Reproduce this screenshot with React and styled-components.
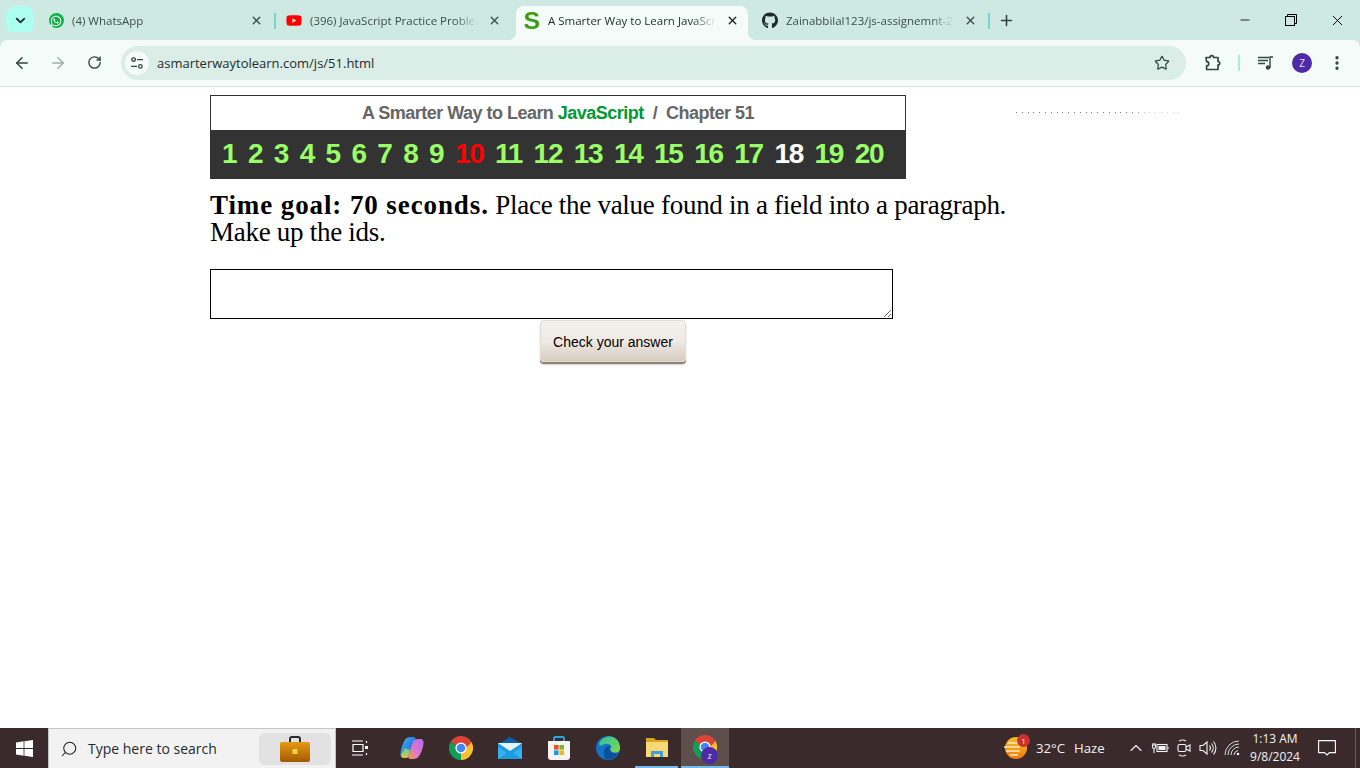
import React from "react";
import styled, { createGlobalStyle } from "styled-components";
import { ArrowLeft, ArrowRight, RotateCw, Star, X, Plus, ChevronDown, EllipsisVertical, Minus, Search, ChevronUp } from "lucide-react";
import { FaGithub, FaYoutube, FaWhatsapp } from "react-icons/fa";

const Global = createGlobalStyle`
  html, body { margin: 0; padding: 0; height: 100%; background: #fff; overflow: hidden; }
  #root { height: 100%; }
  * { box-sizing: border-box; }
`;

const Shell = styled.div`
  display: flex;
  flex-direction: column;
  width: 1360px;
  height: 768px;
  overflow: hidden;
  font-family: "Open Sans", "Noto Sans", sans-serif;
`;

const TabStrip = styled.div`
  display: flex;
  align-items: flex-start;
  height: 40px;
  padding: 6px 0 0 6px;
  background: #cee8e2;
  flex: none;
`;

const TabMenu = styled.div`
  width: 28px;
  height: 28px;
  margin-right: 6px;
  border-radius: 9px;
  background: #adfff0;
  color: #1c2b28;
  display: flex;
  align-items: center;
  justify-content: center;
`;

const Tab = styled.div`
  position: relative;
  width: 232px;
  height: 34px;
  padding: 0 8px 5px;
  display: flex;
  align-items: center;
  gap: 8px;
  border-radius: 8px 8px 0 0;
  background: ${(p) => (p.$active ? "#f4fbf8" : "transparent")};
  color: ${(p) => (p.$active ? "#1d2b28" : "#3d4f4b")};
  ${(p) =>
    p.$active &&
    `
    &::before, &::after {
      content: "";
      position: absolute;
      bottom: 0;
      width: 8px;
      height: 8px;
    }
    &::before { left: -8px; background: radial-gradient(circle at 0 0, #cee8e2 8px, #f4fbf8 8.5px); }
    &::after { right: -8px; background: radial-gradient(circle at 100% 0, #cee8e2 8px, #f4fbf8 8.5px); }
  `}
`;

const FavSlot = styled.span`
  width: 16px;
  height: 16px;
  flex: none;
  display: flex;
  align-items: center;
  justify-content: center;
`;

const WhatsBadge = styled.span`
  width: 15px;
  height: 15px;
  border-radius: 50%;
  background: #12b04a;
  color: #fff;
  display: flex;
  align-items: center;
  justify-content: center;
`;

const SFav = styled.span`
  font: 700 23px/16px "Liberation Sans", Arial, sans-serif;
  color: #3a9e0f;
  transform: scaleX(1.08);
`;

const TabTitle = styled.span`
  width: 168px;
  flex: none;
  overflow: hidden;
  white-space: nowrap;
  font-size: 11.5px;
  line-height: 16px;
  -webkit-mask-image: linear-gradient(90deg, #000 86%, transparent 100%);
  mask-image: linear-gradient(90deg, #000 86%, transparent 100%);
`;

const TabClose = styled.span`
  width: 16px;
  height: 16px;
  flex: none;
  display: flex;
  align-items: center;
  justify-content: center;
  color: ${(p) => (p.$active ? "#1d2b28" : "#3d4f4b")};
`;

const TabGap = styled.span`
  width: 6px;
  height: 34px;
  flex: none;
  padding-bottom: 5px;
  display: flex;
  align-items: center;
  justify-content: center;
  &::after {
    content: "";
    display: ${(p) => (p.$line ? "block" : "none")};
    width: 2px;
    height: 16px;
    background: #7dd6cb;
  }
`;

const NewTab = styled.span`
  width: 28px;
  height: 29px;
  display: flex;
  align-items: center;
  justify-content: center;
  color: #33463f;
`;

const WindowControls = styled.div`
  margin-left: auto;
  margin-top: -6px;
  display: flex;
`;

const WinBtn = styled.span`
  width: 46px;
  height: 40px;
  display: flex;
  align-items: center;
  justify-content: center;
  color: #000;
`;

const Toolbar = styled.div`
  height: 47px;
  flex: none;
  display: flex;
  align-items: center;
  padding: 0 0 1px 4px;
  background: #f4fbf8;
  border-bottom: 1px solid #d8e6e2;
  border-radius: 8px 8px 0 0;
  box-shadow: 0 -8px 0 0 #cee8e2;
`;

const NavBtn = styled.span`
  width: 36px;
  height: 36px;
  flex: none;
  display: flex;
  align-items: center;
  justify-content: center;
  color: ${(p) => (p.$off ? "#9fb0ac" : "#33463f")};
`;

const Omnibox = styled.div`
  width: 1065px;
  height: 34px;
  margin-left: 9px;
  flex: none;
  display: flex;
  align-items: center;
  padding: 0 16px 0 4px;
  background: #daede7;
  border-radius: 17px;
`;

const SiteChip = styled.span`
  width: 24px;
  height: 24px;
  flex: none;
  border-radius: 50%;
  background: #f4fbf8;
  color: #33463f;
  display: flex;
  align-items: center;
  justify-content: center;
  margin-right: 8px;
`;

const Url = styled.span`
  flex: 1;
  font-size: 13px;
  color: #1f2e2b;
`;

const ToolIcon = styled.span`
  width: ${(p) => p.$w || 36}px;
  flex: none;
  display: flex;
  align-items: center;
  justify-content: center;
  color: #33463f;
`;

const ToolSep = styled.span`
  width: 2px;
  height: 16px;
  flex: none;
  background: #9ff0e4;
  margin: 0 0 0 -1px;
`;

const Avatar = styled.span`
  width: 20px;
  height: 20px;
  border-radius: 50%;
  background: #4f2aa6;
  color: #e8defc;
  font-size: 10px;
  display: flex;
  align-items: center;
  justify-content: center;
`;

const Page = styled.main`
  flex: 1;
  min-height: 0;
  padding: 8px 0 0 210px;
  background: #fff;
`;

const TopRow = styled.div`
  display: flex;
  align-items: flex-start;
`;

const HeaderBox = styled.header`
  width: 696px;
  height: 84px;
  flex: none;
  border: 1px solid #333;
  border-bottom: 0;
  background: #fff;
`;

const Dots = styled.div`
  width: 166px;
  height: 1px;
  margin: 17px 0 0 110px;
  background: repeating-linear-gradient(90deg, #777 0 1px, transparent 1px 5.8px);
  -webkit-mask-image: linear-gradient(90deg, #000 70%, #0005 80%);
  mask-image: linear-gradient(90deg, #000 70%, #0005 80%);
`;

const Title = styled.h1`
  margin: 0;
  height: 34px;
  text-align: center;
  font: 700 18px/34px "Liberation Sans", Arial, sans-serif;
  letter-spacing: -0.52px;
  color: #666;
  white-space: pre;
`;

const Green = styled.span`
  color: #009933;
`;

const Chapters = styled.nav`
  height: 49px;
  margin: 0 -1px;
  background: #333;
  display: flex;
  align-items: center;
  padding: 0 0 2px 12px;
  gap: 11.6px;
  font: 700 28px/34px "Liberation Sans", Arial, sans-serif;
  letter-spacing: -1.3px;
`;

const Chapter = styled.a`
  color: ${(p) => (p.$current ? "#fff" : p.$red ? "#ff0000" : "#99ff66")};
  text-decoration: none;
`;

const Instructions = styled.p`
  margin: 13px 0 0;
  width: 810px;
  font: 400 27px/27px "Liberation Serif", "Times New Roman", serif;
  letter-spacing: -0.28px;
  color: #000;
`;

const Strong = styled.b`
  letter-spacing: 0.9px;
`;

const Answer = styled.textarea`
  display: block;
  width: 683px;
  height: 50px;
  margin: 23px 0 0;
  padding: 2px;
  border: 1px solid #000;
  border-radius: 0;
  outline: 0;
  background: #fff;
`;

const CheckButton = styled.button`
  display: block;
  width: 146px;
  height: 42px;
  margin: 1px 0 0 330px;
  padding: 2px 0 0;
  border: 1px solid #e2dcd4;
  border-radius: 4px;
  background: linear-gradient(180deg, #f4f0ec 0%, #efeae5 50%, #d6cbbf 100%);
  box-shadow: 0 2px 0 #8f8173, 0 3px 2px #d8d2cb;
  font: 400 14px/20px "Liberation Sans", Arial, sans-serif;
  color: #000;
`;

const Taskbar = styled.footer`
  height: 40px;
  flex: none;
  display: flex;
  align-items: stretch;
  background: #3a2a2c;
  color: #fff;
`;

const StartBtn = styled.span`
  width: 48px;
  flex: none;
  display: flex;
  align-items: center;
  justify-content: center;
`;

const SearchBox = styled.div`
  width: 288px;
  flex: none;
  display: flex;
  align-items: center;
  padding: 0 4px 0 11px;
  background: #f2f2f2;
  border: 1px solid #c4c4c4;
  border-bottom: 0;
  color: #222;
`;

const MirroredSearch = styled(Search)`
  transform: scaleX(-1);
  flex: none;
`;

const SearchText = styled.span`
  margin-left: 10px;
  flex: 1;
  font-size: 14px;
  color: #1f2a33;
`;

const SearchPromo = styled.span`
  width: 72px;
  height: 32px;
  flex: none;
  border-radius: 6px;
  background: #e2e2e2;
  display: flex;
  align-items: center;
  justify-content: center;
`;

const TaskSlot = styled.span`
  position: relative;
  width: ${(p) => p.$w || 49}px;
  flex: none;
  display: flex;
  align-items: center;
  justify-content: center;
  margin-right: ${(p) => p.$mr || 0}px;
  background: ${(p) => (p.$active ? "#5f4f4c" : "transparent")};
  border-bottom: ${(p) => (p.$open ? "2px solid #76b9ed" : "0")};
  ${(p) => p.$open && !p.$active && "border-image: linear-gradient(90deg, transparent 8%, #76b9ed 8%, #76b9ed 92%, transparent 92%) 1;"}
`;

const ChromeBadge = styled.span`
  position: absolute;
  left: 20px;
  top: 19px;
  width: 17px;
  height: 17px;
  border-radius: 50%;
  background: #4f2aa6;
  color: #eee;
  font-size: 9px;
  display: flex;
  align-items: center;
  justify-content: center;
`;

const Tray = styled.div`
  margin-left: auto;
  display: flex;
  align-items: center;
  font-size: 13.2px;
  color: #f2f2f2;
`;

const WeatherIcon = styled.span`
  position: relative;
  width: 24px;
  height: 24px;
  margin-right: 9px;
  display: block;
`;

const WeatherBadge = styled.span`
  position: absolute;
  right: -3px;
  top: -2px;
  width: 13px;
  height: 13px;
  border-radius: 50%;
  background: #c8322b;
  color: #fff;
  font-size: 8px;
  line-height: 13px;
  text-align: center;
`;

const Temp = styled.span`
  width: 38px;
`;

const Haze = styled.span`
  width: 50px;
`;

const TrayIcon = styled.span`
  width: ${(p) => p.$w || 24}px;
  flex: none;
  display: flex;
  align-items: center;
  justify-content: center;
  color: #f2f2f2;
`;

const Clock = styled.span`
  width: 62px;
  margin-right: 6px;
  text-align: center;
  font-size: 12px;
  line-height: 18px;
`;

const ClockLine = styled.span`
  display: block;
`;

const Notify = styled.span`
  width: 30px;
  display: flex;
  align-items: center;
  justify-content: center;
`;

const DesktopPeek = styled.span`
  width: 5px;
  margin-left: 13px;
  align-self: stretch;
  border-left: 1px solid #6a5b5c;
`;

const ChromeIcon = ({ size = 24 }) => (
  <svg width={size} height={size} viewBox="0 0 24 24">
    <path d="M12 12 L22.4 6 A12 12 0 0 0 1.6 6 Z" fill="#db4437" />
    <path d="M12 12 L1.6 6 A12 12 0 0 0 12 24 Z" fill="#0f9d58" />
    <path d="M12 12 L12 24 A12 12 0 0 0 22.4 6 Z" fill="#fbc02d" />
    <path d="M12 6.5 H22.4 L17 12Z" fill="#db4437" />
    <circle cx="12" cy="12" r="5.6" fill="#fff" />
    <circle cx="12" cy="12" r="4.3" fill="#4285f4" />
  </svg>
);

const SlidersIcon = () => (
  <svg width="14" height="14" viewBox="0 0 14 14" fill="none" stroke="currentColor" strokeWidth="1.3">
    <circle cx="3.6" cy="3.6" r="1.8" />
    <path d="M7 3.6h6M1 10.4h6" />
    <circle cx="10.4" cy="10.4" r="1.8" />
  </svg>
);

const PuzzleIcon = () => (
  <svg width="18" height="18" viewBox="0 0 18 18" fill="none" stroke="currentColor" strokeWidth="1.7" strokeLinejoin="round">
    <path d="M2 3.5h4a1.8 1.8 0 0 1 3.6 0h4.4v4a1.6 1.6 0 0 1 0 3.4v4.6H2.6v-3.6a2.1 2.1 0 0 0 0-4.3Z" />
  </svg>
);

const MediaIcon = () => (
  <svg width="16" height="14" viewBox="0 0 16 14" fill="none" stroke="currentColor" strokeWidth="1.4">
    <path d="M0 1.5h11M0 4.5h10M0 7.5h7" />
    <path d="M12 12V1h3" />
    <circle cx="10" cy="11.5" r="2.2" fill="currentColor" stroke="none" />
  </svg>
);

const WinLogo = () => (
  <svg width="17" height="17" viewBox="0 0 17 17" fill="#fff">
    <path d="M0 2.4 7.6 1.3V8H0ZM8.4 1.2 17 0V8H8.4ZM0 9h7.6v6.7L0 14.6ZM8.4 9H17v8l-8.6-1.2Z" />
  </svg>
);

const Restore = () => (
  <svg width="12" height="12" viewBox="0 0 12 12" fill="none" stroke="currentColor">
    <rect x="0.5" y="2.5" width="9" height="9" />
    <path d="M2.5 2.5V.5h9v9h-2" />
  </svg>
);

const Briefcase = () => (
  <svg width="32" height="26" viewBox="0 0 32 26">
    <defs>
      <linearGradient id="bc" x1="0" y1="0" x2="0" y2="1">
        <stop offset="0" stopColor="#e59a16" />
        <stop offset="1" stopColor="#a35a00" />
      </linearGradient>
    </defs>
    <path d="M11 6V3a2 2 0 0 1 2-2h6a2 2 0 0 1 2 2v3" fill="none" stroke="#2a2a2a" strokeWidth="2" />
    <rect x="1" y="6" width="30" height="20" rx="2" fill="url(#bc)" />
    <rect x="13.5" y="13" width="5" height="5" fill="#f4d43c" />
  </svg>
);

const TaskView = () => (
  <svg width="16" height="16" viewBox="0 0 16 16" fill="none" stroke="#fff" strokeWidth="1.2">
    <path d="M0 1h11M0 15h11" />
    <path d="M1 4.500h10v7H1Z" />
    <path d="M14.500 1v2M14.500 13v2" />
    <rect x="13" y="6" width="3" height="3" fill="#fff" stroke="none" />
  </svg>
);

const Copilot = () => (
  <svg width="24" height="24" viewBox="0 0 24 24">
    <defs>
      <linearGradient id="cpa" x1="0" y1="0" x2="1" y2="1">
        <stop offset="0" stopColor="#3ac6e6" />
        <stop offset="0.5" stopColor="#2f7fe6" />
        <stop offset="0.85" stopColor="#7d5bd8" />
        <stop offset="1" stopColor="#f05a5a" />
      </linearGradient>
      <linearGradient id="cpb" x1="1" y1="0" x2="0" y2="1">
        <stop offset="0" stopColor="#b56be8" />
        <stop offset="0.55" stopColor="#d877d0" />
        <stop offset="1" stopColor="#f7a13b" />
      </linearGradient>
      <linearGradient id="cpc" x1="0" y1="0" x2="0" y2="1">
        <stop offset="0" stopColor="#55d0a0" />
        <stop offset="1" stopColor="#e8c43a" />
      </linearGradient>
    </defs>
    <path d="M6 2.500C7.500 1 10 1 13 1c2 0 3 1 2.500 3L11 19c-.5 2-2.500 3-4.500 3H4c-3 0-4-2-3.500-5C1 13 3 6 6 2.500Z" fill="url(#cpa)" />
    <path d="M2 17c-1.500 2-1 4.500 2 5 2 .2 4 0 4.500-2.500L10 14 5 12Z" fill="url(#cpc)" />
    <path d="M18 21.500c-1.500 1.500-4 1.500-7 1.500-2 0-3-1-2.500-3L13 6c.5-2 2.500-3 4.500-3H20c3 0 4 2 3.500 5-.5 4-2.500 10-5.500 13.500Z" fill="url(#cpb)" />
  </svg>
);

const Mail = () => (
  <svg width="24" height="22" viewBox="0 0 24 22">
    <path d="M0 7 12 0l12 7v2H0Z" fill="#0f5fa8" />
    <rect y="6" width="24" height="16" fill="#1f9be0" />
    <path d="M0 6h24L12 14Z" fill="#e8f4fb" />
    <path d="M0 22V10l9 6-9 6Z" fill="#37b1ee" />
    <path d="M24 22V10l-9 6 9 6Z" fill="#37b1ee" />
  </svg>
);

const Store = () => (
  <svg width="24" height="24" viewBox="0 0 24 24">
    <path d="M7 5V2a1 1 0 0 1 1-1h8a1 1 0 0 1 1 1v3" fill="none" stroke="#27a6e0" strokeWidth="1.8" />
    <path d="M1 5h22v16a3 3 0 0 1-3 3H4a3 3 0 0 1-3-3Z" fill="#f4f4f4" />
    <rect x="7" y="9" width="4.6" height="4.6" fill="#e4502a" />
    <rect x="12.4" y="9" width="4.6" height="4.6" fill="#7db81f" />
    <rect x="7" y="14.4" width="4.6" height="4.6" fill="#1e9be0" />
    <rect x="12.4" y="14.4" width="4.6" height="4.6" fill="#f6b60e" />
  </svg>
);

const Edge = () => (
  <svg width="24" height="24" viewBox="0 0 24 24">
    <defs>
      <linearGradient id="edg" x1="0" y1="0" x2="1" y2="1">
        <stop offset="0" stopColor="#2fc2a0" />
        <stop offset="1" stopColor="#7fd84a" />
      </linearGradient>
    </defs>
    <circle cx="12" cy="12" r="12" fill="#1173c5" />
    <path d="M3 8C5 2 11 0 15 0.6 21 1.5 24.500 7 24 13c-.3 3-3.500 4-6.500 3.500C14.500 16 13 13 15.500 11c-1-3-5-4-8-2.500-2 1-3.500 2-4.500-.5Z" fill="url(#edg)" />
    <path d="M8 16c0-4 3-6.500 7-5.500-2 2-1.500 5 2 6.500 2 .8 4 .5 5.500-.5-2 4-6 7-10.500 7C8 23.500 8 19 8 16Z" fill="#0c4f9c" />
  </svg>
);

const Folder = () => (
  <svg width="24" height="22" viewBox="0 0 24 22">
    <path d="M1 2h8l2 2h12v5H1Z" fill="#d8a520" />
    <path d="M1 6h22v15H1Z" fill="#f8d775" />
    <path d="M6 21v-6h12v6h-3v-3H9v3Z" fill="#3d9fe0" />
  </svg>
);

const Sun = () => (
  <svg width="24" height="24" viewBox="0 0 24 24">
    <defs>
      <linearGradient id="sun" x1="0" y1="0" x2="0" y2="1">
        <stop offset="0" stopColor="#f8c025" />
        <stop offset="1" stopColor="#ee7a10" />
      </linearGradient>
    </defs>
    <circle cx="13" cy="12" r="11" fill="url(#sun)" />
    <path d="M5 7h14M1 11h16M3 15h14M7 19h8" stroke="#f9e9c4" strokeWidth="1.6" />
  </svg>
);

const Battery = () => (
  <svg width="18" height="14" viewBox="0 0 18 14" fill="none" stroke="#f2f2f2" strokeWidth="1.1">
    <rect x="6" y="3.500" width="10" height="7" />
    <rect x="7.500" y="5" width="7" height="4" fill="#f2f2f2" stroke="none" />
    <path d="M17 6v2M1 4h4M2 2v2M4 2v2M3 7v5" />
    <path d="M1.500 4v2a1.500 1.500 0 0 0 3 0V4" />
  </svg>
);

const Camera = () => (
  <svg width="16" height="18" viewBox="0 0 16 18" fill="none" stroke="#f2f2f2" strokeWidth="1.1">
    <rect x="2" y="5.500" width="8" height="7" rx="1.500" />
    <path d="m10 8 4-2v6l-4-2M3 2a7 7 0 0 1 7 0M3 16a7 7 0 0 0 7 0" />
  </svg>
);

const Speaker = () => (
  <svg width="18" height="16" viewBox="0 0 18 16" fill="none" stroke="#f2f2f2" strokeWidth="1.1">
    <path d="M1 5.500h3l4-3.500v12l-4-3.500H1Z" />
    <path d="M10.500 5.500a4 4 0 0 1 0 5M12.500 3.500a7 7 0 0 1 0 9M14.500 1.500a10 10 0 0 1 0 13" />
  </svg>
);

const Wifi = () => (
  <svg width="16" height="16" viewBox="0 0 16 16" fill="none" stroke="#d8d8d8" strokeWidth="1">
    <path d="M1 15A14 14 0 0 1 15 1M4 15A11 11 0 0 1 15 4M7 15a8 8 0 0 1 8-8M10 15a5 5 0 0 1 4-4.500" />
    <circle cx="14" cy="14" r="1.300" fill="#fff" stroke="none" />
  </svg>
);

const Callout = () => (
  <svg width="18" height="16" viewBox="0 0 18 16" fill="none" stroke="#fff" strokeWidth="1.1">
    <path d="M.6.6h16.800v12H11.500L9 15l-2.500-2.400H.6Z" />
  </svg>
);

const chapters = [1, 2, 3, 4, 5, 6, 7, 8, 9, 10, 11, 12, 13, 14, 15, 16, 17, 18, 19, 20];

const tabs = [
  { id: "wa", title: "(4) WhatsApp", icon: <WhatsBadge><FaWhatsapp size={12} /></WhatsBadge>, line: true },
  { id: "yt", title: "(396) JavaScript Practice Problems", icon: <FaYoutube size={17} color="#f00" /> },
  { id: "as", title: "A Smarter Way to Learn JavaScript", icon: <SFav>S</SFav>, active: true },
  { id: "gh", title: "Zainabbilal123/js-assignemnt-2", icon: <FaGithub size={17} color="#1d2b28" />, line: true },
];

export default function App() {
  return (
    <>
      <Global />
      <Shell>
        <TabStrip>
          <TabMenu><ChevronDown size={15} strokeWidth={3} /></TabMenu>
          {tabs.map((t) => (
            <React.Fragment key={t.id}>
              <Tab $active={t.active}>
                <FavSlot>{t.icon}</FavSlot>
                <TabTitle>{t.title}</TabTitle>
                <TabClose $active={t.active}><X size={13} strokeWidth={2.6} /></TabClose>
              </Tab>
              <TabGap $line={t.line} />
            </React.Fragment>
          ))}
          <NewTab><Plus size={17} strokeWidth={2.2} /></NewTab>
          <WindowControls>
            <WinBtn><Minus size={14} strokeWidth={1.4} /></WinBtn>
            <WinBtn><Restore /></WinBtn>
            <WinBtn><X size={17} strokeWidth={1.4} /></WinBtn>
          </WindowControls>
        </TabStrip>
        <Toolbar>
          <NavBtn><ArrowLeft size={18} strokeWidth={2} /></NavBtn>
          <NavBtn $off><ArrowRight size={18} strokeWidth={2} /></NavBtn>
          <NavBtn><RotateCw size={15} strokeWidth={2.2} /></NavBtn>
          <Omnibox>
            <SiteChip><SlidersIcon /></SiteChip>
            <Url>asmarterwaytolearn.com/js/51.html</Url>
            <Star size={16} strokeWidth={1.8} color="#33463f" />
          </Omnibox>
          <ToolIcon $w={53}><PuzzleIcon /></ToolIcon>
          <ToolSep />
          <ToolIcon $w={52}><MediaIcon /></ToolIcon>
          <ToolIcon $w={20}><Avatar>Z</Avatar></ToolIcon>
          <ToolIcon $w={50}><EllipsisVertical size={18} strokeWidth={2.4} /></ToolIcon>
        </Toolbar>
        <Page>
          <TopRow>
            <HeaderBox>
              <Title>A Smarter Way to Learn <Green>JavaScript</Green>{"  /  "}Chapter 51</Title>
              <Chapters>
                {chapters.map((n) => (
                  <Chapter key={n} href="#" $red={n === 10} $current={n === 18}>{n}</Chapter>
                ))}
              </Chapters>
            </HeaderBox>
            <Dots />
          </TopRow>
          <Instructions>
            <Strong>Time goal: 70 seconds.</Strong> Place the value found in a field into a paragraph. Make up the ids.
          </Instructions>
          <Answer />
          <CheckButton>Check your answer</CheckButton>
        </Page>
        <Taskbar>
          <StartBtn><WinLogo /></StartBtn>
          <SearchBox>
            <MirroredSearch size={18} strokeWidth={1.4} />
            <SearchText>Type here to search</SearchText>
            <SearchPromo><Briefcase /></SearchPromo>
          </SearchBox>
          <TaskSlot $w={48} $mr={3}><TaskView /></TaskSlot>
          <TaskSlot><Copilot /></TaskSlot>
          <TaskSlot><ChromeIcon /></TaskSlot>
          <TaskSlot><Mail /></TaskSlot>
          <TaskSlot><Store /></TaskSlot>
          <TaskSlot><Edge /></TaskSlot>
          <TaskSlot $open><Folder /></TaskSlot>
          <TaskSlot $w={48} $open $active>
            <ChromeIcon />
            <ChromeBadge>z</ChromeBadge>
          </TaskSlot>
          <Tray>
            <WeatherIcon><Sun /><WeatherBadge>1</WeatherBadge></WeatherIcon>
            <Temp>32°C</Temp>
            <Haze>Haze</Haze>
            <TrayIcon><ChevronUp size={20} strokeWidth={1.3} /></TrayIcon>
            <TrayIcon><Battery /></TrayIcon>
            <TrayIcon><Camera /></TrayIcon>
            <TrayIcon><Speaker /></TrayIcon>
            <TrayIcon><Wifi /></TrayIcon>
            <Clock>
              <ClockLine>1:13 AM</ClockLine>
              <ClockLine>9/8/2024</ClockLine>
            </Clock>
            <Notify><Callout /></Notify>
            <DesktopPeek />
          </Tray>
        </Taskbar>
      </Shell>
    </>
  );
}
